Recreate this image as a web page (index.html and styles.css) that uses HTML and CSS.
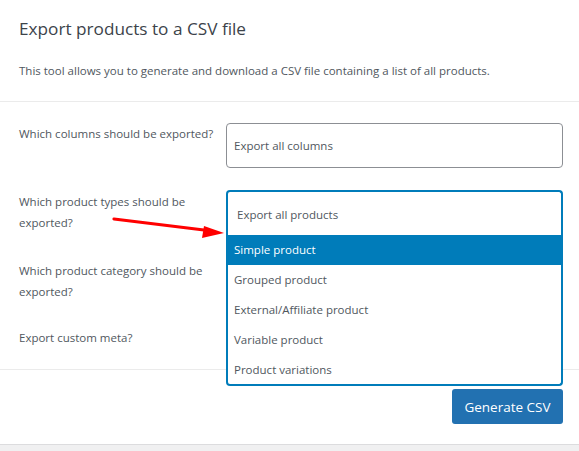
FILE: index.html
```html
<!DOCTYPE html>
<html>
<head>
<meta charset="utf-8">
<link rel="stylesheet" href="styles.css">
</head>
<body>
<div class="card">
  <header class="head">
    <h2 class="title">Export products to a CSV file</h2>
    <p class="desc">This tool allows you to generate and download a CSV file containing a list of all products.</p>
  </header>
  <section class="form">
    <div class="row row1">
      <label class="label">Which columns should be exported?</label>
      <div class="select"><span class="placeholder">Export all columns</span></div>
    </div>
    <div class="row row2">
      <label class="label">Which product types should be exported?</label>
      <div class="select-open">
        <div class="selection"><span class="placeholder">Export all products</span></div>
        <ul class="dropdown">
          <li class="option active">Simple product</li>
          <li class="option">Grouped product</li>
          <li class="option">External/Affiliate product</li>
          <li class="option">Variable product</li>
          <li class="option">Product variations</li>
        </ul>
      </div>
    </div>
    <div class="row row3">
      <label class="label">Which product category should be exported?</label>
      <div class="select"></div>
    </div>
    <div class="row row4">
      <label class="label">Export custom meta?</label>
      <div class="check"></div>
    </div>
  </section>
  <footer class="foot">
    <button class="btn">Generate CSV</button>
  </footer>
  <svg class="arrow" width="579" height="451" viewBox="0 0 579 451">
    <line x1="114" y1="219" x2="208" y2="230.5" stroke="#ff0000" stroke-width="3.2" stroke-linecap="round"/>
    <polygon points="224,233 204,226 202,238" fill="#ff0000"/>
  </svg>
</div>
</body>
</html>
```
FILE: styles.css
```css
html, body {
  margin: 0;
  padding: 0;
}
body {
  background: #f0f0f1;
  font-family: "Open Sans", "Noto Sans", sans-serif;
  color: #50575e;
  font-size: 11.5px;
}
.card {
  position: relative;
  background: #fff;
  height: 445px;
  border-bottom: 1px solid #dcdcde;
  box-sizing: border-box;
}
.head {
  padding: 16px 19px 0;
  height: 102px;
  box-sizing: border-box;
  border-bottom: 1px solid #ebebeb;
}
.title {
  margin: 0;
  font-size: 17.2px;
  line-height: 26px;
  font-weight: 400;
  color: #3c434a;
}
.desc {
  margin: 19px 0 0;
  line-height: 20px;
  color: #50575e;
}
.form {
  padding: 0 16px 0 19px;
  height: 268px;
  box-sizing: border-box;
  border-bottom: 1px solid #ebebeb;
}
.row {
  display: grid;
  grid-template-columns: 207px 1fr;
  align-items: start;
}
.row1 { padding-top: 21px; }
.row2 { padding-top: 22px; }
.row3 { padding-top: 23px; }
.row4 { padding-top: 22px; }
.label {
  line-height: 21px;
  padding-top: 1px;
  color: #50575e;
  padding-right: 2px;
}
.row1 .label { padding-top: 0; }
.select {
  height: 45px;
  box-sizing: border-box;
  border: 1px solid #8c8f94;
  border-radius: 4px;
  display: flex;
  align-items: center;
  padding-left: 7px;
  color: #50575e;
}
.select-open {
  position: relative;
  height: 46px;
}
.selection {
  height: 46px;
  box-sizing: border-box;
  border: 2px solid #007cba;
  border-bottom: none;
  border-radius: 4px 4px 0 0;
  display: flex;
  align-items: center;
  padding-left: 9px;
  padding-top: 1px;
  color: #50575e;
}
.dropdown {
  position: absolute;
  z-index: 2;
  top: 45px;
  left: 0;
  right: 0;
  margin: 0;
  padding: 0;
  list-style: none;
  background: #fff;
  border: 2px solid #007cba;
  border-top: none;
  border-radius: 0 0 4px 4px;
}
.option {
  height: 29.8px;
  display: flex;
  align-items: center;
  padding-left: 6px;
  color: #50575e;
}
.option.active {
  background: #007cba;
  color: #fff;
  margin: 0 -2px;
  padding-left: 8px;
}
.check {
  height: 21px;
}
.foot {
  display: flex;
  justify-content: flex-end;
  padding: 19px 16px 0 19px;
}
.btn {
  width: 111px;
  height: 35px;
  border: none;
  border-radius: 3px;
  background: #2271b1;
  color: #fff;
  font-family: "Open Sans", "Noto Sans", sans-serif;
  font-size: 13.5px;
  padding: 0;
}
.arrow {
  position: absolute;
  left: 0;
  top: 0;
  z-index: 3;
  pointer-events: none;
}
```
